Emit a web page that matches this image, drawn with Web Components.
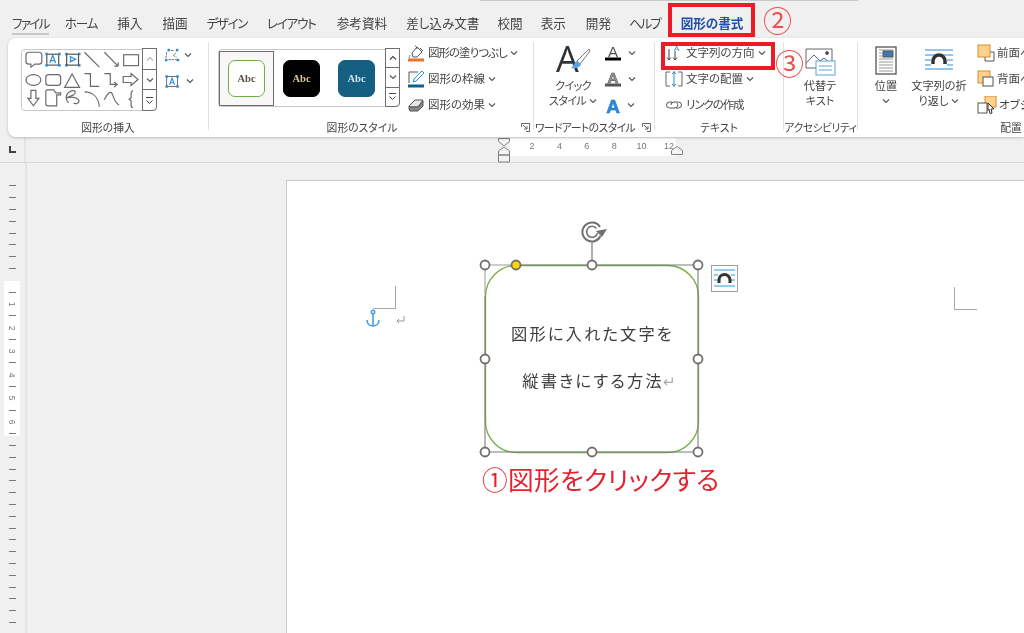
<!DOCTYPE html>
<html lang="ja"><head><meta charset="utf-8"><title>図形の書式</title>
<style>
html,body{margin:0;padding:0;background:#f0f0f0;overflow:hidden}
body{font-family:"Noto Sans CJK JP","Noto Sans",sans-serif;color:#444;font-feature-settings:"palt"}
x-shape span i{font-style:normal;font-size:15px;letter-spacing:0;color:#aaa;margin-left:-1px}
</style></head><body>
<x-app>
  <x-tabs>
    <x-tab first style="letter-spacing:-1.7px;margin-right:-4px">ファイル</x-tab><x-tab style="letter-spacing:-1.200px">ホーム</x-tab><x-tab>挿入</x-tab><x-tab>描画</x-tab><x-tab style="letter-spacing:-1.500px;margin-left:-1px">デザイン</x-tab><x-tab style="letter-spacing:-1.200px">レイアウト</x-tab><x-tab style="margin-left:1px">参考資料</x-tab><x-tab style="margin-left:-1px">差し込み文書</x-tab><x-tab style="margin-left:-2px">校閲</x-tab><x-tab style="margin-left:-2px">表示</x-tab><x-tab>開発</x-tab><x-tab style="letter-spacing:-1.500px;margin-left:-2px">ヘルプ</x-tab><x-tab active>図形の書式</x-tab>
  </x-tabs>
  <x-ribbon>
    <x-group label="図形の挿入" w="200" pad="13">
      <div style="display:flex;gap:8px;align-items:flex-start">
        <x-gallery w="136" h="62" style="margin-top:9px">
          <svg width="120" height="60" viewBox="22 50 120 60" fill="none" stroke="#6a6a6a" stroke-width="1.2">
            <path d="M28 52h10a3 3 0 0 1 3 3v6a3 3 0 0 1-3 3h-4l-4 3v-3h-2a3 3 0 0 1-3-3v-6a3 3 0 0 1 3-3z"/>
            <rect x="46" y="54" width="12" height="11" stroke="#555"/>
            <g fill="#2e8bd8" stroke="none"><rect x="44.5" y="52.5" width="2.5" height="2.5"/><rect x="57.5" y="52.5" width="2.5" height="2.5"/><rect x="44.5" y="64" width="2.5" height="2.5"/><rect x="57.5" y="64" width="2.5" height="2.5"/><rect x="64.5" y="52.5" width="2.5" height="2.5"/><rect x="77.5" y="52.5" width="2.5" height="2.5"/><rect x="64.5" y="64" width="2.5" height="2.5"/><rect x="77.5" y="64" width="2.5" height="2.5"/></g>
            <path d="M49 63l3-8 3 8M50 60.500h4" stroke="#2e8bd8"/>
            <rect x="66" y="54" width="12" height="11" stroke="#555"/>
            <path d="M69 56l6 3-6 3M70 57v4" stroke="#2e8bd8"/>
            <path d="M84 52l15 15M104 52l14 14M118 66v-4M118 66h-4"/>
            <rect x="123.500" y="54.500" width="15" height="11"/>
            <ellipse cx="32.500" cy="80" rx="7.500" ry="5.500"/>
            <rect x="45" y="74.500" width="15" height="11" rx="3"/>
            <path d="M71.500 74l7.500 13.500H64z"/>
            <path d="M84 73.500h6v13h9M104 73.500h6v11h6M114 82l3 2.500-3 2.500"/>
            <path d="M123 76.500h8v-3l7 6-7 6v-3h-8z"/>
            <path d="M30 90.500h5v8h3l-5.500 7.500-5.500-7.500h3z"/>
            <path d="M45 92a2 2 0 0 1 2-2h6l2 3h5v2h-4v11h-9a2 2 0 0 1-2-2z"/>
            <path d="M68 103c-4-4-3-10 3-12 4-1 5 2 2 4l-7 3c4-1 10-1 12 2s-3 5-5 3"/>
            <path d="M84 92c8 0 14 5 15 15M104 100c3-6 6-10 8-6 2 5 3 10 7 11"/>
            <path d="M133 91c-2 0-2 1-2 3v4l-2 1.500 2 1.500v4c0 2 0 3 2 3"/>
          </svg>
          <x-scroll slot="scroll" light></x-scroll>
        </x-gallery>
        <div style="display:flex;flex-direction:column;margin-top:2px;margin-left:-1px">
          <x-cmd chev h="26" gap="0"><svg slot="icon" width="17" height="15" viewBox="0 0 20 18" fill="none" stroke="#555"><path d="M3 5l-1 8M5 14h11M8 3h4M14 6l-3 3 4 2" stroke-dasharray="3 1"/><g fill="#2e8bd8" stroke="none"><rect x="4" y="1" width="3" height="3"/><rect x="14" y="1" width="3" height="3"/><rect x="1" y="13" width="3" height="3"/><rect x="15" y="13" width="3" height="3"/></g></svg></x-cmd>
          <x-cmd chev h="26" gap="1"><svg slot="icon" width="17" height="15" viewBox="0 0 20 18" fill="none" stroke="#555"><rect x="3" y="3" width="13" height="12"/><path d="M6.500 13l3-8 3 8M7.500 10.500h4" stroke="#2e8bd8" stroke-width="1.300"/><g fill="#2e8bd8" stroke="none"><rect x="1.500" y="1.500" width="3" height="3"/><rect x="14.500" y="1.500" width="3" height="3"/><rect x="1.500" y="13.500" width="3" height="3"/><rect x="14.500" y="13.500" width="3" height="3"/></g></svg></x-cmd>
        </div>
      </div>
    </x-group>
    <x-sep></x-sep>
    <x-group label="図形のスタイル" w="324" pad="9" launcher>
      <div style="display:flex;gap:8px;align-items:flex-start">
        <x-gallery w="182" h="58" style="margin-top:9px;padding-left:0">
          <div style="display:flex;align-items:center;height:58px">
            <x-abc sel style="--bg:#fff;--bd:#70ad47;--fg:#5c5147"></x-abc>
            <x-abc style="--bg:#000;--bd:#000;--fg:#d9c6a0"></x-abc>
            <x-abc style="--bg:#156082;--bd:#156082;--fg:#cfe2ea"></x-abc>
          </div>
          <x-scroll slot="scroll"></x-scroll>
        </x-gallery>
        <div style="display:flex;flex-direction:column;margin-left:-1px">
          <x-cmd chev h="26" text="図形の塗りつぶし" style="letter-spacing:-1px"><svg slot="icon" width="18" height="18" viewBox="0 0 18 18" fill="none" stroke="#555"><path d="M5 9l5-6 5 5-5 5H6z" fill="#fff"/><path d="M13 4l3 3M8 2c1 0 2 1 2 3"/><path d="M3 11c-1 2-1 3 0 3" stroke="#2e8bd8"/><rect x="1" y="14.500" width="16" height="3" fill="#e97132" stroke="none"/></svg></x-cmd>
          <x-cmd chev h="26" text="図形の枠線"><svg slot="icon" width="18" height="18" viewBox="0 0 18 18" fill="none" stroke="#555"><path d="M2 13V2h9"/><path d="M6 12l1-3 8-8 2 2-8 8z" fill="#fff" stroke="#2e8bd8"/><rect x="1" y="14.500" width="16" height="3" fill="#156082" stroke="none"/></svg></x-cmd>
          <x-cmd chev h="26" text="図形の効果"><svg slot="icon" width="18" height="18" viewBox="0 0 18 18" stroke="#555"><path d="M2 10l6-6h8l-5 7H3z" fill="#e6e6e6"/><path d="M2 10v3l1 2h8l5-5V5l-5 6H3z" fill="#8a8a8a"/></svg></x-cmd>
        </div>
      </div>
    </x-group>
    <x-sep></x-sep>
    <x-group label="ワードアートのスタイル" w="120" pad="2" launcher style="letter-spacing:-.55px">
      <div style="display:flex;align-items:flex-start;letter-spacing:0">
        <x-big w="74" chev label="クイック|スタイル" style="letter-spacing:-.7px"><svg slot="icon" width="36" height="30" viewBox="0 0 36 30"><text x="1" y="26" font-family="Open Sans,Liberation Sans" font-size="36" fill="#333">A</text><path d="M34 3L22 15l3 3L35 5z" fill="#fff" stroke="#777"/><path d="M22 15c-3 1-3 5-6 7 4 1 9 0 10-4z" fill="#5ba3dc"/></svg></x-big>
        <div style="display:flex;flex-direction:column;margin-left:-6px">
          <x-cmd chev h="26" gap="1.500"><x-a slot="icon" style="--a:#555;--b:#000"></x-a></x-cmd>
          <x-cmd chev h="26" gap="1.500"><x-a slot="icon" outline style="--a:#999;--b:#555"></x-a></x-cmd>
          <x-cmd chev h="26" gap="1"><x-a slot="icon" bold style="--a:#2e8bd8;--b:transparent"></x-a></x-cmd>
        </div>
      </div>
    </x-group>
    <x-sep></x-sep>
    <x-group label="テキスト" w="128" pad="10">
      <div style="display:flex;flex-direction:column">
        <x-cmd chev h="26" text="文字列の方向"><svg slot="icon" width="18" height="18" viewBox="0 0 18 18" fill="none" stroke="#444"><path d="M4 5v11M2 13.500L4 16l2-2.500M10 7v9M8 13.500l2 2.500 2-2.500"/><text x="9" y="6.500" font-family="Liberation Sans" font-size="8" fill="#2e8bd8" stroke="none">A</text></svg></x-cmd>
        <x-cmd chev h="26" text="文字の配置"><svg slot="icon" width="18" height="18" viewBox="0 0 18 18" fill="none" stroke="#666"><path d="M5 2H1v14h4M13 2h4v14h-4"/><path d="M9 1v16M7 4l2-2 2 2M7 14l2 2 2-2" stroke="#2e8bd8"/></svg></x-cmd>
        <x-cmd h="26" text="リンクの作成" style="letter-spacing:-1.100px"><svg slot="icon" width="18" height="18" viewBox="0 0 18 18" fill="none" stroke="#555"><path d="M7 6H4.500a3 3 0 0 0 0 6H10a3 3 0 0 0 2-5"/><path d="M6 9a3 3 0 0 1 3-3h4.500a3 3 0 0 1 0 6H11"/></svg></x-cmd>
      </div>
    </x-group>
    <x-sep></x-sep>
    <x-group label="アクセシビリティ" w="73" pad="0" style="letter-spacing:-.45px">
      <x-big w="72" label="代替テ|キスト" style="letter-spacing:0"><svg slot="icon" width="32" height="30" viewBox="0 0 32 30" fill="none" stroke="#666"><path d="M2 3h26v12M2 3v19h14"/><path d="M2 17l8-8 6 6 4-3 6 5"/><circle cx="23" cy="7" r="1.500" fill="#444"/><rect x="12" y="15" width="19" height="14" fill="#fff" stroke="#5ba3dc"/><path d="M15 20h13M15 24h13" stroke="#5ba3dc"/></svg></x-big>
    </x-group>
    <x-sep></x-sep>
    <x-group label="配置" w="240" pad="4" labelpad="66">
      <div style="display:flex;align-items:flex-start">
        <x-big w="48" label="位置|" chev><svg slot="icon" width="22" height="30" viewBox="0 0 22 30" fill="none" stroke="#555"><rect x="1" y="1" width="20" height="27" fill="#fff" stroke-width="1.300"/><path d="M4 4h14M4 7h3M4 10h3M4 13h14M4 16h14M4 19h14M4 22h14M4 25h14" stroke="#999"/><rect x="8" y="5" width="10" height="6" fill="#3d7ab5" stroke="#555"/></svg></x-big>
        <x-big w="58" label="文字列の折|り返し" chev><svg slot="icon" width="30" height="30" viewBox="0 0 30 30" fill="none" stroke="#2e8bd8"><path d="M1 4h28M1 9h28M1 14h6M23 14h6M1 19h6M23 19h6M1 23h28"/><path d="M9 18v-3a6 6 0 0 1 12 0v3" stroke="#333" stroke-width="3.500"/></svg></x-big>
        <div style="display:flex;flex-direction:column;margin-left:9px">
          <x-cmd h="26" text="前面へ移動" gap="2"><svg slot="icon" width="18" height="18" viewBox="0 0 18 18" fill="none"><path d="M8 8h9v9H8z" stroke="#555"/><rect x="1" y="1" width="12" height="12" fill="#fbd38d" stroke="#e08a2c"/></svg></x-cmd>
          <x-cmd h="26" text="背面へ移動" gap="2"><svg slot="icon" width="18" height="18" viewBox="0 0 18 18" fill="none"><rect x="1" y="1" width="12" height="12" fill="#fbd38d" stroke="#e08a2c"/><rect x="6" y="7" width="10" height="9" fill="#fff" stroke="#555"/></svg></x-cmd>
          <x-cmd h="26" text="オブジェクトの選択と表示" gap="2"><svg slot="icon" width="20" height="18" viewBox="0 0 20 18" fill="none"><rect x="8" y="0" width="11" height="11" fill="#fbd38d" stroke="#e08a2c"/><rect x="1" y="7" width="9" height="10" fill="#fff" stroke="#555"/><path d="M11 7l6 6h-3l1 4-2 .5-1-4-1 1z" fill="#fff" stroke="#333"/></svg></x-cmd>
        </div>
      </div>
    </x-group>
  </x-ribbon>
  <x-hruler></x-hruler>
  <x-main>
    <x-vruler></x-vruler>
    <x-canvas>
      <x-page>
        <x-mark style="left:86px;top:105px;border-width:0 1px 1px 0"></x-mark>
        <x-mark style="left:667px;top:106px;border-width:0 0 1px 1px"></x-mark>
        <x-anchor></x-anchor>
        <x-shape>
          <span>図形に入れた文字を</span>
          <span class="l2">縦書きにする方法<i>↵</i></span>
        </x-shape>
        <x-caption>①図形をクリックする</x-caption>
      </x-page>
    </x-canvas>
  </x-main>
  <x-callout box style="left:668px;top:3px;width:87px;height:34px"></x-callout>
  <x-callout box style="left:661px;top:42px;width:114px;height:28px"></x-callout>
  <x-callout style="left:763px;top:0">②</x-callout>
  <x-callout style="left:775px;top:43px">③</x-callout>
</x-app>
<script>
const FONT='"Noto Sans CJK JP","Noto Sans",sans-serif';
function def(name,html,extra){
  customElements.define(name,class extends HTMLElement{
    constructor(){super();const r=this.attachShadow({mode:'open'});r.innerHTML=typeof html==='function'?html(this):html;}
    connectedCallback(){if(extra)extra(this);}
  });
}
const chev=`<svg width="8" height="6" viewBox="0 0 8 6" fill="none" stroke="#555" stroke-width="1.100"><path d="M1 1.500l3 3 3-3"/></svg>`;
def('x-app',`<style>:host{display:flex;flex-direction:column;position:relative;width:1024px;height:633px;overflow:hidden;background:#f0f0f0;filter:blur(.3px)}
.top{position:absolute;left:480px;top:0;width:378px;height:1px;background:#c9c9c9}</style><div class="top"></div><slot></slot>`);
def('x-tabs',`<style>:host{display:flex;height:38px;flex:none;padding-left:12px;gap:20px;align-items:flex-start;box-sizing:border-box}</style><slot></slot>`);
def('x-tab',e=>`<style>:host{display:block;font-family:${FONT};font-size:12.6px;line-height:1;font-feature-settings:"palt";color:#444;padding-top:17px;height:21px;position:relative;white-space:nowrap}
:host([active]){color:#1f4fa8;font-weight:700}
u{position:absolute;left:0;right:0;top:33px;height:2px}
:host([active]) u{background:#2b57a7;top:33px}
:host([first]) u{background:#c8c8c8}</style><slot></slot><u></u>`);
def('x-ribbon',`<style>:host{display:flex;flex:none;height:99px;margin-left:8px;background:#fff;border-radius:8px 0 0 8px;box-sizing:border-box;padding-top:2px;box-shadow:0 1px 3px rgba(0,0,0,.22);position:relative;z-index:1}</style><slot></slot>`);
def('x-sep',`<style>:host{display:block;flex:none;width:1px;height:88px;margin-top:2px;background:#e1e1e1}</style>`);
def('x-group',e=>`<style>:host{display:flex;flex-direction:column;flex:none;width:${e.getAttribute('w')}px;height:97px;position:relative}
.c{height:78px;padding-left:${e.getAttribute('pad')||0}px;box-sizing:border-box}
.l{height:16px;margin-top:1px;font-family:${FONT};font-size:10.8px;line-height:16px;font-feature-settings:"palt";color:#444;text-align:center;white-space:nowrap;padding-left:${e.getAttribute('labelpad')||0}px;padding-right:${e.hasAttribute('launcher')?18:0}px}
svg{position:absolute;right:3px;bottom:5px}</style>
<div class="c"><slot></slot></div><div class="l">${e.getAttribute('label')}</div>
${e.hasAttribute('launcher')?'<svg width="9" height="9" viewBox="0 0 9 9" fill="none" stroke="#666"><path d="M.5 4V.5h8v8H5M2 2l4 4M6 3v3H3"/></svg>':''}`);
def('x-gallery',e=>`<style>:host{display:flex;flex:none;width:${e.getAttribute('w')}px;height:${e.getAttribute('h')}px;border:1px solid #c8c8c8;border-radius:4px;box-sizing:border-box;background:#fff;justify-content:space-between;align-items:center;padding-left:1px}</style><slot></slot><slot name="scroll"></slot>`);
def('x-scroll',e=>`<style>:host{display:flex;flex-direction:column;flex:none;width:15px;align-self:stretch;margin:-1px -1px -1px 0}
b{flex:1;display:flex;align-items:center;justify-content:center;border:1px solid #6e6e6e;margin-top:-1px;background:#fff}
b:first-child{margin-top:0;border-radius:0 4px 0 0}b:last-child{border-radius:0 0 4px 0}
:host([light]) b:first-child{border-color:#d9d9d9}
.d{opacity:.4}</style>
<b><svg width="8" height="6" viewBox="0 0 8 6" fill="none" stroke="#444" stroke-width="1.100" class="${e.hasAttribute('light')?'d':''}"><path d="M1 4.500l3-3 3 3"/></svg></b>
<b>${chev}</b>
<b><svg width="9" height="9" viewBox="0 0 9 9" fill="none" stroke="#444"><path d="M1 1.500h7M1.500 4.500l3 3 3-3"/></svg></b>`);
def('x-abc',e=>`<style>:host{display:flex;flex:none;align-items:center;justify-content:center;width:55px;height:55px;box-sizing:border-box}
:host([sel]){border:1px solid #6e6e6e;background:#f7f7f7}
div{width:37px;height:37px;box-sizing:border-box;border-radius:7px;border:1px solid var(--bd);background:var(--bg);color:var(--fg);font:700 10.500px/35px "Liberation Serif",serif;text-align:center}</style><div>Abc</div>`);
def('x-cmd',e=>{const t=e.getAttribute('text');const g=e.getAttribute('gap');return `<style>:host{display:flex;align-items:center;flex:none;height:${e.getAttribute('h')||26}px;gap:${g===null?3:g}px;white-space:nowrap;font-family:${FONT};font-size:11.5px;line-height:1;font-feature-settings:"palt";color:#444}
::slotted(*){flex:none}</style><slot name="icon"></slot>${t?`<span>${t}</span>`:'<i style="width:3px"></i>'}${e.hasAttribute('chev')?chev:''}`});
def('x-big',e=>{const [a,b]=e.getAttribute('label').split('|');return `<style>:host{display:flex;flex-direction:column;align-items:center;flex:none;width:${e.getAttribute('w')}px;padding-top:6px;font-family:${FONT};font-size:11.2px;line-height:15px;font-feature-settings:"palt";color:#444;text-align:center;white-space:nowrap}
::slotted(svg){height:30px;margin-bottom:2px}
p{margin:0;height:15px;display:flex;align-items:center;gap:3px;justify-content:center}</style>
<slot name="icon"></slot><p>${a}</p><p>${b}${e.hasAttribute('chev')?chev:''}</p>`});
def('x-a',e=>{const bar=`<rect x="1" y="13.500" width="16" height="3" fill="var(--b)"/>`;
 return `<style>:host{display:block;width:18px;height:18px}</style><svg width="18" height="18" viewBox="0 0 18 18"><text x="9" y="${e.hasAttribute('bold')?16.500:12.500}" text-anchor="middle" font-family="Liberation Sans" font-weight="${e.hasAttribute('outline')||e.hasAttribute('bold')?700:400}" font-size="${e.hasAttribute('bold')?19:15}" fill="var(--a)" ${e.hasAttribute('outline')?'stroke="#555" stroke-width=".6"':''} ${e.hasAttribute('bold')?'stroke="#1a6fb8" stroke-width=".5"':''}>A</text>${bar}</svg>`});
def('x-hruler',()=>{let n='';for(const v of [2,4,6,8,10,12])n+=`<span>${v}</span>`;return `<style>:host{display:flex;flex:none;height:26px;box-sizing:border-box;border-bottom:1px solid #d9d9d9;background:#f0f0f0}
.tab{width:26px;height:25px;border-right:2px solid #e4e4e4;box-sizing:border-box;flex:none;padding:9px 0 0 9px}
.tab svg{display:block}
.gap{width:472px;flex:none}
.m{width:12px;flex:none;display:block}
.s{width:166px;height:18px;margin-top:1px;background:#fff;display:flex;padding-left:8.300px;box-sizing:border-box;flex:none;font:9px/16px "Liberation Sans",sans-serif;color:#777}
.s span{width:27.400px;flex:none;text-align:center}
.r{margin:9px 0 0 -5px;flex:none;display:block}</style>
<div class="tab"><svg width="7" height="7" viewBox="0 0 7 7"><path d="M1 0v6h6" fill="none" stroke="#444" stroke-width="2"/></svg></div><div class="gap"></div>
<svg class="m" width="12" height="26" viewBox="0 0 12 26" fill="#f4f4f4" stroke="#808080"><path d="M.5 1.500h11v3L6 9 .5 4.500zM6 10l5.500 4v4H.5v-4zM.5 18h11v7H.5z"/></svg>
<div class="s">${n}</div>
<svg class="r" width="12" height="10" viewBox="0 0 12 10" fill="#f4f4f4" stroke="#808080"><path d="M6 .5l5.500 4v4H.5v-4z"/></svg>`});
def('x-main',`<style>:host{display:flex;flex:1;min-height:0}</style><slot></slot>`);
def('x-vruler',()=>{let h='';const labels={10:1,12:2,14:3,16:4,18:5,20:6};
 for(let i=0;i<38;i++){ if(i===8){h+='<u></u>';continue}
  h+=labels[i]?`<u><em>${labels[i]}</em></u>`:`<u><b></b></u>`;}
 return `<style>:host{display:block;flex:none;width:27px;box-sizing:border-box;border-right:2px solid #e4e4e4;padding-top:17.100px;position:relative;overflow:hidden}
u{display:flex;height:11.800px;align-items:center;justify-content:center;width:27px;position:relative;left:-.5px;text-decoration:none;z-index:1}
b{display:block;width:7px;height:1px;margin-left:-1px;background:#777}
em{font:normal 8.500px/10px "Liberation Sans",sans-serif;color:#777;transform:rotate(90deg);margin-left:-1px}
.w{position:absolute;left:4px;top:118px;width:16px;height:155px;background:#fff}</style><div class="w"></div>${h}`});
def('x-canvas',`<style>:host{display:block;flex:1;min-width:0;padding:18px 0 0 260px;overflow:hidden;box-sizing:border-box}</style><slot></slot>`);
def('x-page',`<style>:host{display:block;position:relative;width:760px;height:470px;background:#fff;border:solid #c8c8c8;border-width:1px 0 0 1px;margin:-1px 0 0 -1px}</style><slot></slot>`);
def('x-mark',`<style>:host{display:block;position:absolute;width:23px;height:23px;border:solid #a8a8a8;box-sizing:border-box}</style>`);
def('x-anchor',`<style>:host{display:block;position:absolute;left:78px;top:128px}</style><svg width="40" height="20" viewBox="0 0 40 20" fill="none"><g stroke="#4a9fdc" stroke-width="1.600"><circle cx="8" cy="3" r="1.700"/><path d="M8 5v12M2 11c0 4 3 6 6 6s6-2 6-6"/></g><path d="M39 7v5h-7M34 10l-2 2 2 2" stroke="#9a9a9a"/></svg>`);
def('x-shape',`<style>:host{display:block;position:absolute;left:185px;top:40px;width:270px;height:250px}
svg{position:absolute;inset:0}
.t{position:absolute;left:14px;top:42px;width:213px;height:187px;display:flex;flex-direction:column;align-items:center;justify-content:center;font-family:"Noto Sans CJK JP",sans-serif;font-size:16.3px;line-height:47px;letter-spacing:2.1px;color:#3d3d3d}
::slotted(span){display:block;white-space:nowrap}
::slotted(.l2){margin-left:13px}</style>
<svg width="270" height="250" viewBox="472 221 270 250" fill="none">
<rect x="485.500" y="265.500" width="213" height="187" rx="31" stroke="#70ad47" stroke-width="1.300"/>
<path d="M516 265H698V452H485V296" stroke="#7d7d7d" stroke-width="1.100"/>
<path d="M485 265h31M485 265v31" stroke="#9a9a9a" stroke-width="1"/>
<path d="M592 241v24" stroke="#7d7d7d" stroke-width="1.200"/>
<path d="M600 227a9.500 9.500 0 1 0 .5 9" stroke="#6f6f6f" stroke-width="2"/>
<path d="M596.500 228.500a5.500 5.500 0 1 0 1 4.500" stroke="#6f6f6f" stroke-width="1.500"/>
<path d="M596 231l11-2-5 8z" fill="#6f6f6f"/>
<g fill="#fff" stroke="#6f6f6f" stroke-width="1.800"><circle cx="485" cy="265" r="4.500"/><circle cx="592" cy="265" r="4.500"/><circle cx="698" cy="265" r="4.500"/><circle cx="485" cy="359" r="4.500"/><circle cx="698" cy="359" r="4.500"/><circle cx="485" cy="452" r="4.500"/><circle cx="592" cy="452" r="4.500"/><circle cx="698" cy="452" r="4.500"/><circle cx="516" cy="265" r="4.500" fill="#ffd500"/></g>
<rect x="711.500" y="265.500" width="26" height="26" fill="#fdfdfd" stroke="#a0a0a0"/>
<path d="M714 270h21M714 275h4M731 275h4M714 280h4M731 280h4M714 286h21" stroke="#2e9be0"/>
<path d="M719 283v-3a5 5 0 0 1 11 0v3" stroke="#333" stroke-width="3"/>
</svg><div class="t"><slot></slot></div>`);
def('x-caption',`<style>:host{display:block;position:absolute;left:195px;top:281px;font-family:"Noto Sans CJK JP",sans-serif;font-size:25.7px;line-height:34px;font-feature-settings:"palt";letter-spacing:.3px;color:#e8212e;white-space:nowrap}</style><slot></slot>`);
def('x-callout',e=>`<style>:host{display:block;position:absolute;z-index:5;box-sizing:border-box;font-family:"Noto Sans CJK JP",sans-serif;font-size:29px;line-height:38px;color:#ee4f4f;white-space:nowrap}
:host([box]){border:4px solid #ed1c24}</style><slot></slot>`);
</script>
</body></html>
